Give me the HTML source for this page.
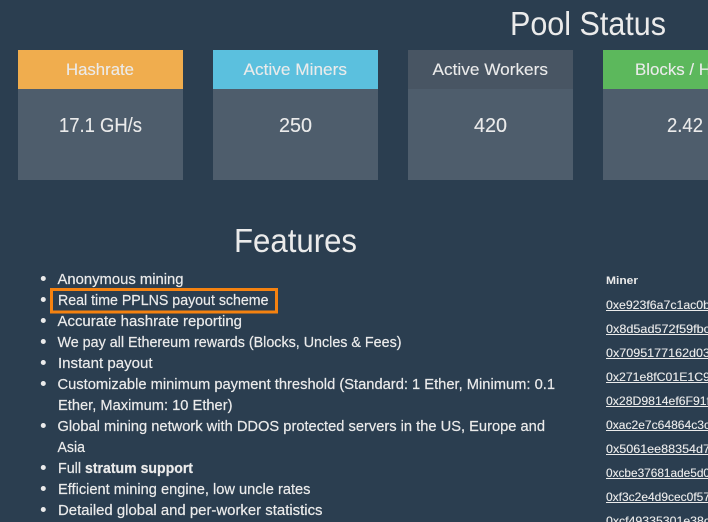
<!DOCTYPE html>
<html><head><meta charset="utf-8"><title>Pool Status</title>
<style>
html,body{margin:0;padding:0;width:708px;height:522px;overflow:hidden;background:#2b3e50}
svg{display:block}
text{font-family:"Liberation Sans",sans-serif;fill:#ebebeb}
.l{font-size:15px;stroke:#ebebeb;stroke-width:.2px}
.a{font-size:12px;stroke:#ebebeb;stroke-width:.12px}
.h{font-size:17px;stroke:#ebebeb;stroke-width:.12px}
.v{font-size:20px;stroke:#ebebeb;stroke-width:.12px}
</style></head><body>
<svg width="708" height="522" viewBox="0 0 708 522" xmlns="http://www.w3.org/2000/svg">
<rect width="708" height="522" fill="#2b3e50"/>
<text x="510" y="35" font-size="33" textLength="156" lengthAdjust="spacingAndGlyphs">Pool Status</text>

<rect x="18" y="50" width="165" height="130" fill="#4e5d6c"/>
<rect x="18" y="50" width="165" height="39" fill="#f0ad4e"/>
<rect x="213" y="50" width="165" height="130" fill="#4e5d6c"/>
<rect x="213" y="50" width="165" height="39" fill="#5bc0de"/>
<rect x="408" y="50" width="165" height="130" fill="#4e5d6c"/>
<rect x="408" y="50" width="165" height="39" fill="#485563"/>
<rect x="603" y="50" width="105" height="130" fill="#4e5d6c"/>
<rect x="603" y="50" width="105" height="39" fill="#5cb85c"/>

<text class="h" x="66" y="75" textLength="68" lengthAdjust="spacingAndGlyphs">Hashrate</text>
<text class="h" x="243.5" y="75" textLength="103.5" lengthAdjust="spacingAndGlyphs">Active Miners</text>
<text class="h" x="432.5" y="75" textLength="115.5" lengthAdjust="spacingAndGlyphs">Active Workers</text>
<text class="h" x="635" y="75" textLength="76" lengthAdjust="spacingAndGlyphs">Blocks / H</text>

<text class="v" x="59" y="132" textLength="83" lengthAdjust="spacingAndGlyphs">17.1 GH/s</text>
<text class="v" x="279" y="132" textLength="33" lengthAdjust="spacingAndGlyphs">250</text>
<text class="v" x="474" y="132" textLength="33" lengthAdjust="spacingAndGlyphs">420</text>
<text class="v" x="667" y="132" textLength="36" lengthAdjust="spacingAndGlyphs">2.42</text>

<text x="234" y="252" font-size="33" textLength="123" lengthAdjust="spacingAndGlyphs">Features</text>

<g fill="#ebebeb">
<circle cx="43.3" cy="278.5" r="2.5"/>
<circle cx="43.3" cy="299.5" r="2.5"/>
<circle cx="43.3" cy="320.5" r="2.5"/>
<circle cx="43.3" cy="341.5" r="2.5"/>
<circle cx="43.3" cy="362.5" r="2.5"/>
<circle cx="43.3" cy="383.5" r="2.5"/>
<circle cx="43.3" cy="425.5" r="2.5"/>
<circle cx="43.3" cy="467.5" r="2.5"/>
<circle cx="43.3" cy="488.5" r="2.5"/>
<circle cx="43.3" cy="509.5" r="2.5"/>
</g>

<text class="l" x="57.5" y="284" textLength="126" lengthAdjust="spacingAndGlyphs">Anonymous mining</text>
<text class="l" x="58" y="305" textLength="210.5" lengthAdjust="spacingAndGlyphs">Real time PPLNS payout scheme</text>
<text class="l" x="57.5" y="326" textLength="184.5" lengthAdjust="spacingAndGlyphs">Accurate hashrate reporting</text>
<text class="l" x="57.5" y="347" textLength="344" lengthAdjust="spacingAndGlyphs">We pay all Ethereum rewards (Blocks, Uncles &amp; Fees)</text>
<text class="l" x="58" y="368" textLength="94.5" lengthAdjust="spacingAndGlyphs">Instant payout</text>
<text class="l" x="57.5" y="389" textLength="497.5" lengthAdjust="spacingAndGlyphs">Customizable minimum payment threshold (Standard: 1 Ether, Minimum: 0.1</text>
<text class="l" x="58" y="410" textLength="174.5" lengthAdjust="spacingAndGlyphs">Ether, Maximum: 10 Ether)</text>
<text class="l" x="57.5" y="431" textLength="487.5" lengthAdjust="spacingAndGlyphs">Global mining network with DDOS protected servers in the US, Europe and</text>
<text class="l" x="57.5" y="452" textLength="27.5" lengthAdjust="spacingAndGlyphs">Asia</text>
<text class="l" x="58" y="473" textLength="23" lengthAdjust="spacingAndGlyphs">Full</text>
<text class="l" x="85" y="473" font-weight="700" textLength="108" lengthAdjust="spacingAndGlyphs">stratum support</text>
<text class="l" x="58" y="494" textLength="252.5" lengthAdjust="spacingAndGlyphs">Efficient mining engine, low uncle rates</text>
<text class="l" x="58" y="515" textLength="264.5" lengthAdjust="spacingAndGlyphs">Detailed global and per-worker statistics</text>

<rect x="51.5" y="289.5" width="225" height="22.5" fill="none" stroke="#f58210" stroke-width="3"/>

<text x="606" y="284" font-size="11" font-weight="700" textLength="32" lengthAdjust="spacingAndGlyphs">Miner</text>

<text class="a" x="606" y="309" textLength="104" lengthAdjust="spacingAndGlyphs">0xe923f6a7c1ac0b</text>
<text class="a" x="606" y="333" textLength="104" lengthAdjust="spacingAndGlyphs">0x8d5ad572f59fbc</text>
<text class="a" x="606" y="357" textLength="104" lengthAdjust="spacingAndGlyphs">0x7095177162d03</text>
<text class="a" x="606" y="381" textLength="104" lengthAdjust="spacingAndGlyphs">0x271e8fC01E1C9</text>
<text class="a" x="606" y="405" textLength="104" lengthAdjust="spacingAndGlyphs">0x28D9814ef6F91f</text>
<text class="a" x="606" y="429" textLength="104" lengthAdjust="spacingAndGlyphs">0xac2e7c64864c3c</text>
<text class="a" x="606" y="453" textLength="104" lengthAdjust="spacingAndGlyphs">0x5061ee88354d7</text>
<text class="a" x="606" y="477" textLength="104" lengthAdjust="spacingAndGlyphs">0xcbe37681ade5d0</text>
<text class="a" x="606" y="501" textLength="104" lengthAdjust="spacingAndGlyphs">0xf3c2e4d9cec0f57</text>
<text class="a" x="606" y="525" textLength="104" lengthAdjust="spacingAndGlyphs">0xcf49335301e38c</text>

<g fill="#ebebeb">
<rect x="606" y="310" width="102" height="1"/>
<rect x="606" y="334" width="102" height="1"/>
<rect x="606" y="358" width="102" height="1"/>
<rect x="606" y="382" width="102" height="1"/>
<rect x="606" y="406" width="102" height="1"/>
<rect x="606" y="430" width="102" height="1"/>
<rect x="606" y="454" width="102" height="1"/>
<rect x="606" y="478" width="102" height="1"/>
<rect x="606" y="502" width="102" height="1"/>
</g>
</svg>
</body></html>
